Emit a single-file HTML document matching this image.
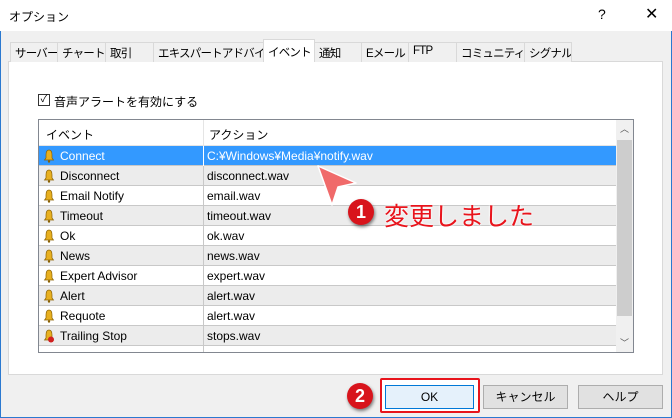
<!DOCTYPE html>
<html><head><meta charset="utf-8"><style>
*{margin:0;padding:0;box-sizing:border-box}
body{width:672px;height:418px;overflow:hidden;background:#f0f0f0;font-family:"Liberation Sans","Noto Sans CJK JP",sans-serif;font-size:12px;color:#000;position:relative}
.win{position:absolute;left:0;top:0;width:672px;height:418px;border:1px solid #2b79d0;border-top:none}
.title{position:absolute;left:0;top:0;width:672px;height:31px;background:#fff}
.title .t{position:absolute;left:9px;top:8px;font-size:12px}
.title .q{position:absolute;left:598px;top:6px;font-size:14px}
.title .x{position:absolute;left:645px;top:4px;font-size:16px}
.tab{position:absolute;top:42px;height:20px;border:1px solid #d9d9d9;border-bottom:none;background:#f0f0f0;font-size:11.5px;padding:2px 0 0 4px;letter-spacing:-0.8px;white-space:nowrap;overflow:hidden}
.panel{position:absolute;left:8px;top:61px;width:655px;height:314px;background:#fff;border:1px solid #d9d9d9}
.list{position:absolute;left:38px;top:119px;width:596px;height:234px;border:1px solid #828790;background:#fff;overflow:hidden}
.row{position:absolute;left:0;width:577px;height:20px;border-bottom:1px solid #c8c8c8;font-size:12px}
.row .a{position:absolute;left:21px;top:3px}
.row .b{position:absolute;left:168px;top:3px}
.row .d{position:absolute;left:164px;top:0;width:1px;height:20px;background:#c8c8c8}
.bell{position:absolute;left:4px;top:3px;width:12px;height:14px}
.g{background:#ececec}
.sb{position:absolute;left:577px;top:0;width:17px;height:232px;background:#f0f0f0}
.btn{position:absolute;top:385px;height:24px;border:1px solid #adadad;background:#e1e1e1;text-align:center;font-size:12px;line-height:22px}
.badge{position:absolute;width:26px;height:26px;border-radius:50%;background:#d8141c;color:#fff;font-weight:bold;font-size:18px;text-align:center;line-height:26px;box-shadow:1px 2px 3px rgba(0,0,0,.5)}
</style></head><body>
<div class="win"></div>
<div class="title"><span class="t">オプション</span><span class="q">?</span><span class="x">✕</span></div>
<div class="panel"></div>
<div class="tab" style="left:10px;width:48px">サーバー</div>
<div class="tab" style="left:57px;width:49px">チャート</div>
<div class="tab" style="left:105px;width:49px">取引</div>
<div class="tab" style="left:153px;width:111px">エキスパートアドバイザ</div>
<div class="tab" style="left:263px;top:39px;height:23px;width:52px;background:#fff;padding-top:4px">イベント</div>
<div class="tab" style="left:314px;width:48px">通知</div>
<div class="tab" style="left:361px;width:48px">Eメール</div>
<div class="tab" style="left:408px;width:49px">FTP</div>
<div class="tab" style="left:456px;width:69px">コミュニティー</div>
<div class="tab" style="left:524px;width:48px">シグナル</div>
<div style="position:absolute;left:38px;top:94px;width:12px;height:12px;border:1px solid #333;background:#fff;font-size:10px;line-height:10px;text-align:center">✓</div>
<div style="position:absolute;left:54px;top:93px">音声アラートを有効にする</div>
<div class="list">
<div style="position:absolute;left:0;top:0;width:577px;height:26px;border-bottom:1px solid #e5e5e5"><span style="position:absolute;left:7px;top:6px">イベント</span><div style="position:absolute;left:164px;top:0;width:1px;height:26px;background:#e5e5e5"></div><span style="position:absolute;left:170px;top:6px">アクション</span></div>
<div class="row" style="top:26px;background:#3399ff;color:#fff"><svg class="bell" viewBox="0 0 12 14"><path d="M6 1C3.5 1 3 4 3 6V9L1.5 11H10.5L9 9V6C9 4 8.5 1 6 1Z" fill="#e8b020" stroke="#8a6000" stroke-width=".7"/><circle cx="6" cy="12.5" r="1.2" fill="#8a6000"/></svg><span class="a">Connect</span><div class="d" style="background:#fff"></div><span class="b">C:¥Windows¥Media¥notify.wav</span></div>
<div class="row g" style="top:46px"><svg class="bell" viewBox="0 0 12 14"><path d="M6 1C3.5 1 3 4 3 6V9L1.5 11H10.5L9 9V6C9 4 8.5 1 6 1Z" fill="#e8b020" stroke="#8a6000" stroke-width=".7"/><circle cx="6" cy="12.5" r="1.2" fill="#8a6000"/></svg><span class="a">Disconnect</span><div class="d"></div><span class="b">disconnect.wav</span></div>
<div class="row" style="top:66px"><svg class="bell" viewBox="0 0 12 14"><path d="M6 1C3.5 1 3 4 3 6V9L1.5 11H10.5L9 9V6C9 4 8.5 1 6 1Z" fill="#e8b020" stroke="#8a6000" stroke-width=".7"/><circle cx="6" cy="12.5" r="1.2" fill="#8a6000"/></svg><span class="a">Email Notify</span><div class="d"></div><span class="b">email.wav</span></div>
<div class="row g" style="top:86px"><svg class="bell" viewBox="0 0 12 14"><path d="M6 1C3.5 1 3 4 3 6V9L1.5 11H10.5L9 9V6C9 4 8.5 1 6 1Z" fill="#e8b020" stroke="#8a6000" stroke-width=".7"/><circle cx="6" cy="12.5" r="1.2" fill="#8a6000"/></svg><span class="a">Timeout</span><div class="d"></div><span class="b">timeout.wav</span></div>
<div class="row" style="top:106px"><svg class="bell" viewBox="0 0 12 14"><path d="M6 1C3.5 1 3 4 3 6V9L1.5 11H10.5L9 9V6C9 4 8.5 1 6 1Z" fill="#e8b020" stroke="#8a6000" stroke-width=".7"/><circle cx="6" cy="12.5" r="1.2" fill="#8a6000"/></svg><span class="a">Ok</span><div class="d"></div><span class="b">ok.wav</span></div>
<div class="row g" style="top:126px"><svg class="bell" viewBox="0 0 12 14"><path d="M6 1C3.5 1 3 4 3 6V9L1.5 11H10.5L9 9V6C9 4 8.5 1 6 1Z" fill="#e8b020" stroke="#8a6000" stroke-width=".7"/><circle cx="6" cy="12.5" r="1.2" fill="#8a6000"/></svg><span class="a">News</span><div class="d"></div><span class="b">news.wav</span></div>
<div class="row" style="top:146px"><svg class="bell" viewBox="0 0 12 14"><path d="M6 1C3.5 1 3 4 3 6V9L1.5 11H10.5L9 9V6C9 4 8.5 1 6 1Z" fill="#e8b020" stroke="#8a6000" stroke-width=".7"/><circle cx="6" cy="12.5" r="1.2" fill="#8a6000"/></svg><span class="a">Expert Advisor</span><div class="d"></div><span class="b">expert.wav</span></div>
<div class="row g" style="top:166px"><svg class="bell" viewBox="0 0 12 14"><path d="M6 1C3.5 1 3 4 3 6V9L1.5 11H10.5L9 9V6C9 4 8.5 1 6 1Z" fill="#e8b020" stroke="#8a6000" stroke-width=".7"/><circle cx="6" cy="12.5" r="1.2" fill="#8a6000"/></svg><span class="a">Alert</span><div class="d"></div><span class="b">alert.wav</span></div>
<div class="row" style="top:186px"><svg class="bell" viewBox="0 0 12 14"><path d="M6 1C3.5 1 3 4 3 6V9L1.5 11H10.5L9 9V6C9 4 8.5 1 6 1Z" fill="#e8b020" stroke="#8a6000" stroke-width=".7"/><circle cx="6" cy="12.5" r="1.2" fill="#8a6000"/></svg><span class="a">Requote</span><div class="d"></div><span class="b">alert.wav</span></div>
<div class="row g" style="top:206px"><svg class="bell" viewBox="0 0 12 14"><path d="M6 1C3.5 1 3 4 3 6V9L1.5 11H10.5L9 9V6C9 4 8.5 1 6 1Z" fill="#e8b020" stroke="#8a6000" stroke-width=".7"/><circle cx="8" cy="10.5" r="3" fill="#d02020"/></svg><span class="a">Trailing Stop</span><div class="d"></div><span class="b">stops.wav</span></div>
<div class="row" style="top:226px"><div class="d"></div></div>
<div class="sb"><div style="position:absolute;left:1px;top:20px;width:15px;height:176px;background:#cdcdcd"></div><span style="position:absolute;left:4px;top:2px;font-size:9px;color:#555">︿</span><span style="position:absolute;left:4px;top:216px;font-size:9px;color:#555">﹀</span></div>
</div>
<svg style="position:absolute;left:0;top:0" width="672" height="418"><path d="M318 166L356 183L338 187L332 205Z" fill="#f06a6a" stroke="#fff" stroke-width="1.5" stroke-linejoin="round"/></svg>
<div class="badge" style="left:348px;top:199px">1</div>
<div style="position:absolute;left:384px;top:197px;font-size:25px;color:#e8141c;text-shadow:0 0 2px #fff,0 0 2px #fff">変更しました</div>
<div style="position:absolute;left:380px;top:378px;width:100px;height:35px;border:2px solid #e8141c;background:#fff;border-radius:2px"></div>
<div class="btn" style="left:385px;width:89px;background:#e5f1fb;border-color:#0078d7">OK</div>
<div class="btn" style="left:483px;width:85px">キャンセル</div>
<div class="btn" style="left:578px;width:85px">ヘルプ</div>
<div class="badge" style="left:347px;top:383px">2</div>
</body></html>
